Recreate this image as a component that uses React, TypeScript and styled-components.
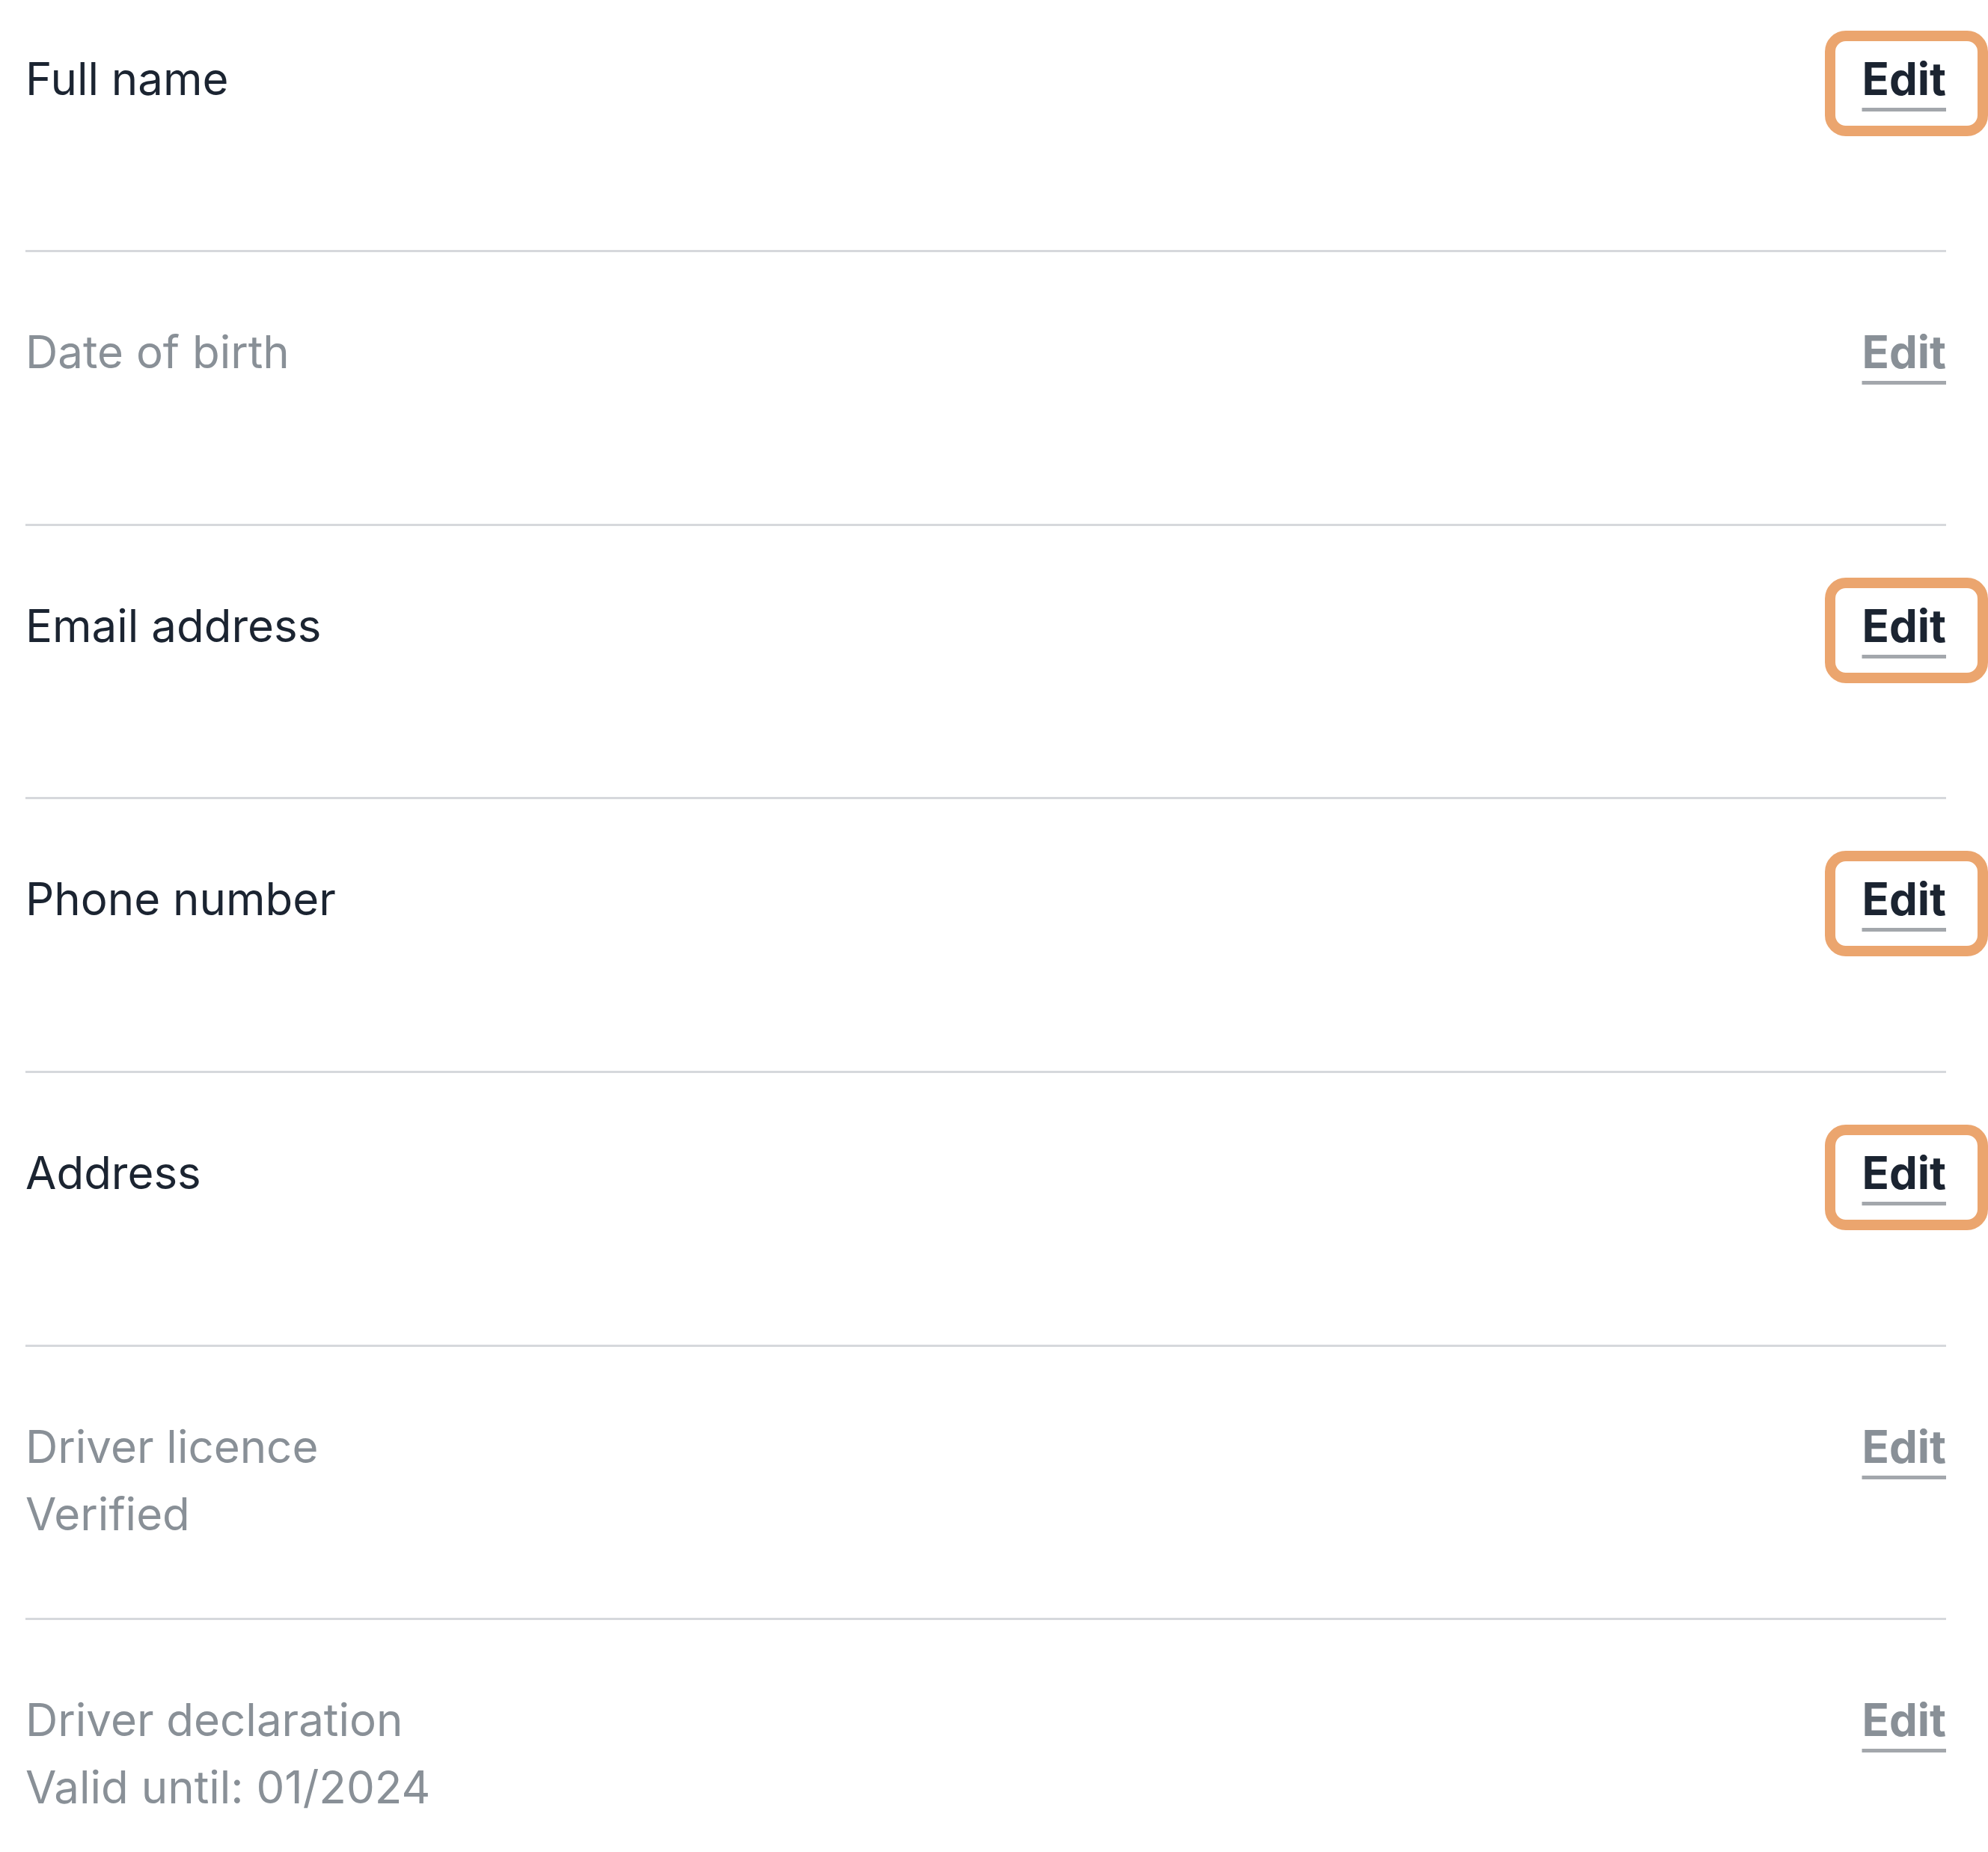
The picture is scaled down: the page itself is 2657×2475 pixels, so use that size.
import * as React from 'react';
import styled, { createGlobalStyle } from 'styled-components';

const GlobalStyle = createGlobalStyle`
  html, body {
    margin: 0;
    padding: 0;
    background: #fff;
  }
  body {
    font-family: Inter, 'Liberation Sans', Arial, sans-serif;
    -webkit-font-smoothing: antialiased;
  }
`;

const List = styled.div`
  padding: 0 56px 0 34px;
`;

const Row = styled.div`
  display: flex;
  align-items: flex-start;
  justify-content: space-between;
  box-sizing: border-box;
  min-height: 365.7px;
  padding-top: 88px;
  border-bottom: 3px solid #d6d8dc;

  &:first-child {
    min-height: 337px;
    padding-top: 60px;
  }

  &:last-child {
    border-bottom: none;
  }
`;

const Label = styled.div<{ $muted?: boolean }>`
  font-size: 60px;
  line-height: 90px;
  color: ${(p) => (p.$muted ? '#899097' : '#1b2431')};
`;

const EditLink = styled.a<{ $muted?: boolean; $focused?: boolean }>`
  position: relative;
  display: block;
  font-size: 60px;
  line-height: 90px;
  font-weight: 700;
  color: ${(p) => (p.$muted ? '#899097' : '#1b2431')};
  text-decoration: underline;
  text-decoration-thickness: 5px;
  text-underline-offset: 17px;
  text-decoration-color: #a3a7ac;
  cursor: pointer;

  ${(p) =>
    p.$focused &&
    `
    &::after {
      content: '';
      position: absolute;
      top: -19px;
      bottom: -32px;
      left: -50px;
      right: -56px;
      border: 14px solid #eba56e;
      border-radius: 28px;
    }
  `}
`;

type Field = {
  label: string;
  sub?: string;
  muted?: boolean;
  focused?: boolean;
};

const fields: Field[] = [
  { label: 'Full name', focused: true },
  { label: 'Date of birth', muted: true },
  { label: 'Email address', focused: true },
  { label: 'Phone number', focused: true },
  { label: 'Address', focused: true },
  { label: 'Driver licence', sub: 'Verified', muted: true },
  { label: 'Driver declaration', sub: 'Valid until: 01/2024', muted: true },
];

export default function App() {
  return (
    <>
      <GlobalStyle />
      <List>
        {fields.map((f) => (
          <Row key={f.label}>
            <Label $muted={f.muted}>
              {f.label}
              {f.sub && <br />}
              {f.sub}
            </Label>
            <EditLink $muted={f.muted} $focused={f.focused}>
              Edit
            </EditLink>
          </Row>
        ))}
      </List>
    </>
  );
}
